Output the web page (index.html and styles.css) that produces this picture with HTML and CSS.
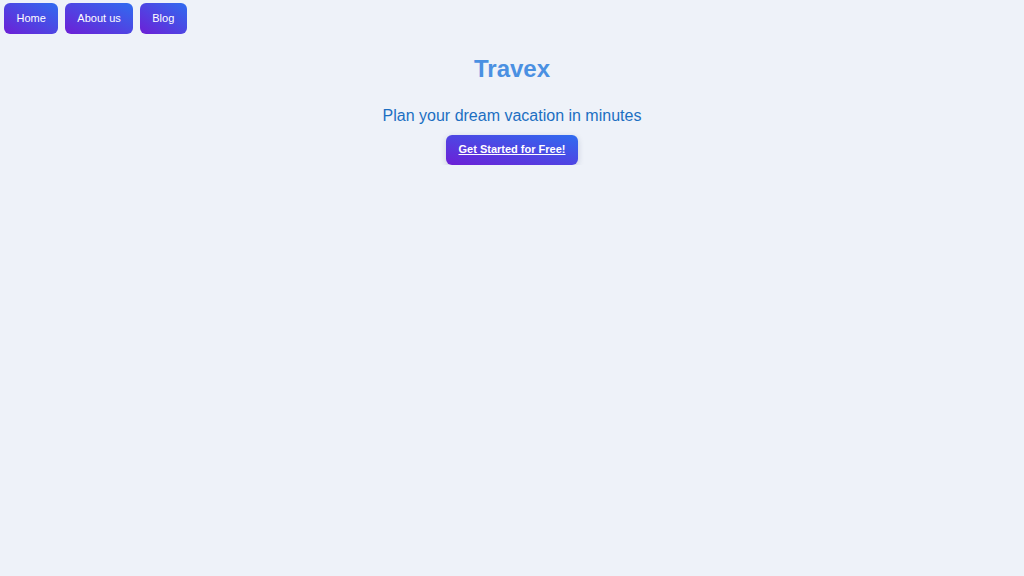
FILE: index.html
```html
<!DOCTYPE html>
<html lang="en">
<head>
<meta charset="utf-8">
<title>Travex</title>
<link rel="stylesheet" href="styles.css">
</head>
<body>
<nav class="nav">
  <a class="nav-btn" href="#">Home</a>
  <a class="nav-btn" href="#">About us</a>
  <a class="nav-btn" href="#">Blog</a>
</nav>
<main class="hero">
  <h1 class="title">Travex</h1>
  <p class="subtitle">Plan your dream vacation in minutes</p>
  <a class="cta" href="#">Get Started for Free!</a>
</main>
</body>
</html>
```
FILE: styles.css
```css
html, body {
  margin: 0;
  padding: 0;
  background: #eef2f9;
  font-family: "Liberation Sans", Arial, sans-serif;
}
.nav {
  display: flex;
  gap: 6.5px;
  padding: 3px 4px;
}
.nav-btn {
  display: block;
  padding: 9px 12.5px;
  font-size: 11px;
  line-height: 13px;
  color: #ffffff;
  text-decoration: none;
  border-radius: 6px;
  background: linear-gradient(to top right, #6d1fd6, #2f6cf0);
}
.hero {
  display: flex;
  flex-direction: column;
  align-items: center;
}
.title {
  margin: 18px 0 0;
  font-size: 24px;
  line-height: 28px;
  font-weight: bold;
  color: #4a90e2;
}
.subtitle {
  margin: 24px 0 0;
  font-size: 16px;
  line-height: 18px;
  color: #1c6fc2;
}
.cta {
  display: block;
  margin-top: 10px;
  padding: 8px 13px;
  font-size: 11px;
  line-height: 13.5px;
  font-weight: bold;
  color: #ffffff;
  text-decoration: underline;
  border-radius: 6px;
  background: linear-gradient(to top right, #6d1fd6, #2f6cf0);
  box-shadow: 0 2px 6px rgba(30, 40, 90, 0.18);
}
```
